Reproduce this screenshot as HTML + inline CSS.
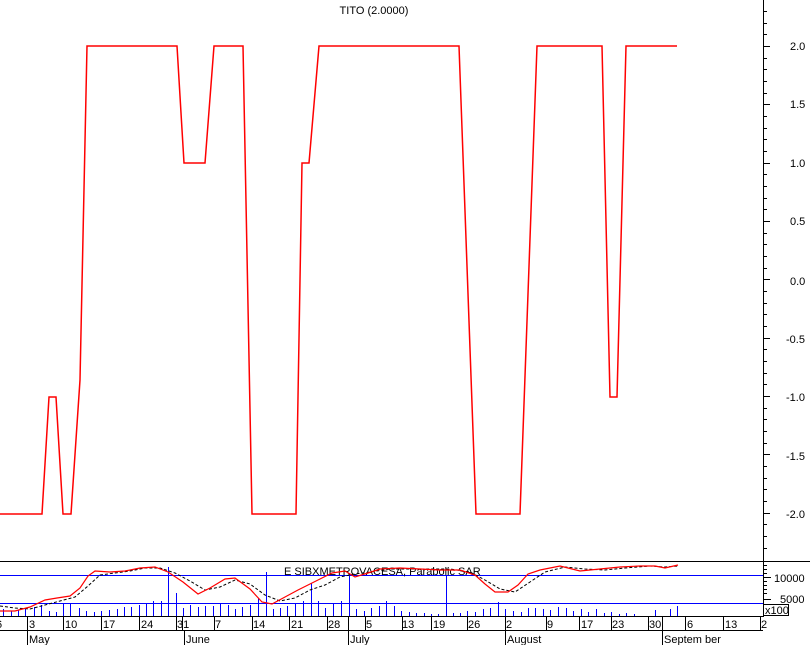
<!DOCTYPE html>
<html><head><meta charset="utf-8"><style>
html,body{margin:0;padding:0;background:#fff;width:810px;height:645px;overflow:hidden}
svg{display:block}
text{font-family:"Liberation Sans",sans-serif;font-size:11px;fill:#000}
</style></head><body>
<svg width="810" height="645" viewBox="0 0 810 645" xmlns="http://www.w3.org/2000/svg">
<rect width="810" height="645" fill="#fff"/>
<text x="374" y="14" font-size="10" text-anchor="middle">TITO (2.0000)</text>
<g shape-rendering="crispEdges">
<line x1="763.5" y1="0" x2="763.5" y2="617" stroke="#000"/>
<g stroke="#000">
<line x1="763" y1="11.5" x2="767" y2="11.5"/><line x1="763" y1="23.5" x2="767" y2="23.5"/><line x1="763" y1="34.5" x2="767" y2="34.5"/>
</g>
<path stroke="#000" d="M763 46.5H770M763 58.5H767M763 69.5H767M763 81.5H767M763 93.5H767M763 104.5H770M763 116.5H767M763 128.5H767M763 139.5H767M763 151.5H767M763 163.5H770M763 174.5H767M763 186.5H767M763 198.5H767M763 209.5H767M763 221.5H770M763 233.5H767M763 244.5H767M763 256.5H767M763 268.5H767M763 279.5H770M763 291.5H767M763 303.5H767M763 314.5H767M763 326.5H767M763 338.5H770M763 349.5H767M763 361.5H767M763 373.5H767M763 384.5H767M763 396.5H770M763 408.5H767M763 419.5H767M763 431.5H767M763 443.5H767M763 454.5H770M763 466.5H767M763 478.5H767M763 489.5H767M763 501.5H767M763 513.5H770M763 524.5H767M763 536.5H767M763 548.5H767"/>
</g>
<g font-size="11">
<text x="790" y="50">2.0</text><text x="790" y="108">1.5</text><text x="790" y="167">1.0</text><text x="790" y="225">0.5</text><text x="790" y="285">0.0</text><text x="786" y="343">-0.5</text><text x="786" y="401">-1.0</text><text x="786" y="460">-1.5</text><text x="786" y="518">-2.0</text>
</g>
<polyline fill="none" stroke="#f00" stroke-width="1.5" points="0,514 42,514 49,397 56,397 63,514 71,514 80,380 87,46 177,46 184,163 205,163 214,46 243,46 252,514 296,514 302,163 309,163 319,46 459,46 476,514 520,514 537,46 602,46 610,397 617,397 626,46 677,46"/>
<g shape-rendering="crispEdges">
<line x1="0" y1="561.5" x2="810" y2="561.5" stroke="#000"/>
<line x1="0" y1="575.5" x2="763" y2="575.5" stroke="#00f"/>
<line x1="0" y1="603.5" x2="763" y2="603.5" stroke="#00f"/>
<g stroke="#000">
<line x1="763" y1="565.5" x2="767" y2="565.5"/><line x1="763" y1="569.5" x2="767" y2="569.5"/><line x1="763" y1="573.5" x2="767" y2="573.5"/><line x1="763" y1="577.5" x2="771" y2="577.5"/><line x1="763" y1="581.5" x2="767" y2="581.5"/><line x1="763" y1="585.5" x2="767" y2="585.5"/><line x1="763" y1="589.5" x2="767" y2="589.5"/><line x1="763" y1="593.5" x2="767" y2="593.5"/><line x1="763" y1="599.5" x2="771" y2="599.5"/>
</g>
<rect x="763.5" y="604.5" width="25" height="11" fill="#fff" stroke="#000"/>
<g stroke="#00f" stroke-width="1">
<path d="M3.5 617V609M11.5 617V611M18.5 617V610M25.5 617V609M34.5 617V607M41.5 617V605M49.5 617V611M56.5 617V612M63.5 617V604M70.5 617V603M79.5 617V608M86.5 617V611M94.5 617V612M101.5 617V611M109.5 617V610M117.5 617V609M124.5 617V607M131.5 617V607M139.5 617V605M146.5 617V603M153.5 617V601M161.5 617V601M168.5 617V567M176.5 617V593M183.5 617V608M190.5 617V605M198.5 617V607M205.5 617V606M213.5 617V606M220.5 617V603M228.5 617V605M235.5 617V609M242.5 617V607M250.5 617V605M258.5 617V598M266.5 617V572M273.5 617V609M280.5 617V608M287.5 617V606M295.5 617V604M303.5 617V601M311.5 617V583M318.5 617V601M325.5 617V608M333.5 617V604M341.5 617V601M349.5 617V573M356.5 617V609M364.5 617V611M371.5 617V608M379.5 617V606M386.5 617V601M394.5 617V606M401.5 617V611M409.5 617V612M416.5 617V613M424.5 617V613M431.5 617V614M438.5 617V614M446.5 617V575M453.5 617V613M460.5 617V613M467.5 617V611M475.5 617V612M483.5 617V609M490.5 617V608M498.5 617V602M505.5 617V609M513.5 617V611M521.5 617V612M528.5 617V608M535.5 617V608M543.5 617V609M550.5 617V610M558.5 617V607M566.5 617V608M573.5 617V611M581.5 617V609M588.5 617V612M596.5 617V609M604.5 617V613M611.5 617V612M619.5 617V614M626.5 617V613M634.5 617V614M655.5 617V610M670.5 617V609M677.5 617V606"/>
</g>
</g>
<text x="774" y="582">10000</text><text x="780" y="603">5000</text>
<text x="765" y="614" font-size="10">x100</text>
<text x="284" y="575" font-size="11">E SIBXMETROVACESA, Parabolic SAR</text>
<polyline fill="none" stroke="#000" stroke-dasharray="3,2" points="0,606 15,608 30,609 45,605 60,601 75,597 88,586 100,575 115,573 130,571 145,568 160,568 175,573 190,581 205,590 220,587 235,580 250,584 265,595 280,601 295,598 310,590 325,585 340,577 355,574 370,572 390,569 420,569 450,569 470,572 485,580 500,589 515,592 530,582 545,572 565,567 585,569 605,570 625,568 650,566 665,567 678,566"/>
<polyline fill="none" stroke="#f00" stroke-width="1.2" points="0,611 15,611 30,607 45,600 57,598 70,596 80,588 88,576 95,571 110,572 125,571 140,568 155,567 168,572 183,582 198,594 210,588 225,579 235,578 250,589 262,602 272,604 285,597 298,590 310,584 320,579 332,573 345,571 355,577 368,573 380,569 400,568 420,569 440,570 460,570 475,575 485,584 495,592 508,592 518,585 528,574 540,570 560,566 580,571 600,569 620,567 640,566 655,566 665,568 678,565"/>
<g shape-rendering="crispEdges">
<line x1="0" y1="616.5" x2="763" y2="616.5" stroke="#000"/>
<line x1="0" y1="630.5" x2="763" y2="630.5" stroke="#000"/>
<path stroke="#000" d="M27.5 617V645M63.5 617V630M101.5 617V630M139.5 617V630M176.5 617V630M184.5 630V645M182.5 617V630M214.5 617V630M252.5 617V630M289.5 617V630M327.5 617V630M348.5 617V645M365.5 617V630M402.5 617V630M431.5 617V630M467.5 617V630M505.5 617V645M546.5 617V630M579.5 617V630M611.5 617V630M648.5 617V630M662.5 617V645M685.5 617V630M723.5 617V630M760.5 617V630"/>
</g>
<g font-size="11">
<text x="-4" y="628">6</text><text x="29" y="628">3</text><text x="65" y="628">10</text><text x="103" y="628">17</text><text x="141" y="628">24</text><text x="177" y="628">31</text><text x="215" y="628">7</text><text x="253" y="628">14</text><text x="291" y="628">21</text><text x="328" y="628">28</text><text x="366" y="628">5</text><text x="402" y="628">13</text><text x="433" y="628">19</text><text x="468" y="628">26</text><text x="506" y="628">2</text><text x="547" y="628">9</text><text x="581" y="628">17</text><text x="612" y="628">23</text><text x="649" y="628">30</text><text x="687" y="628">6</text><text x="725" y="628">13</text><text x="761" y="628">2</text>
<text x="29" y="643">May</text><text x="186" y="643">June</text><text x="350" y="643">July</text><text x="507" y="643">August</text><text x="664" y="643">Septem ber</text>
</g>
</svg>
</body></html>
